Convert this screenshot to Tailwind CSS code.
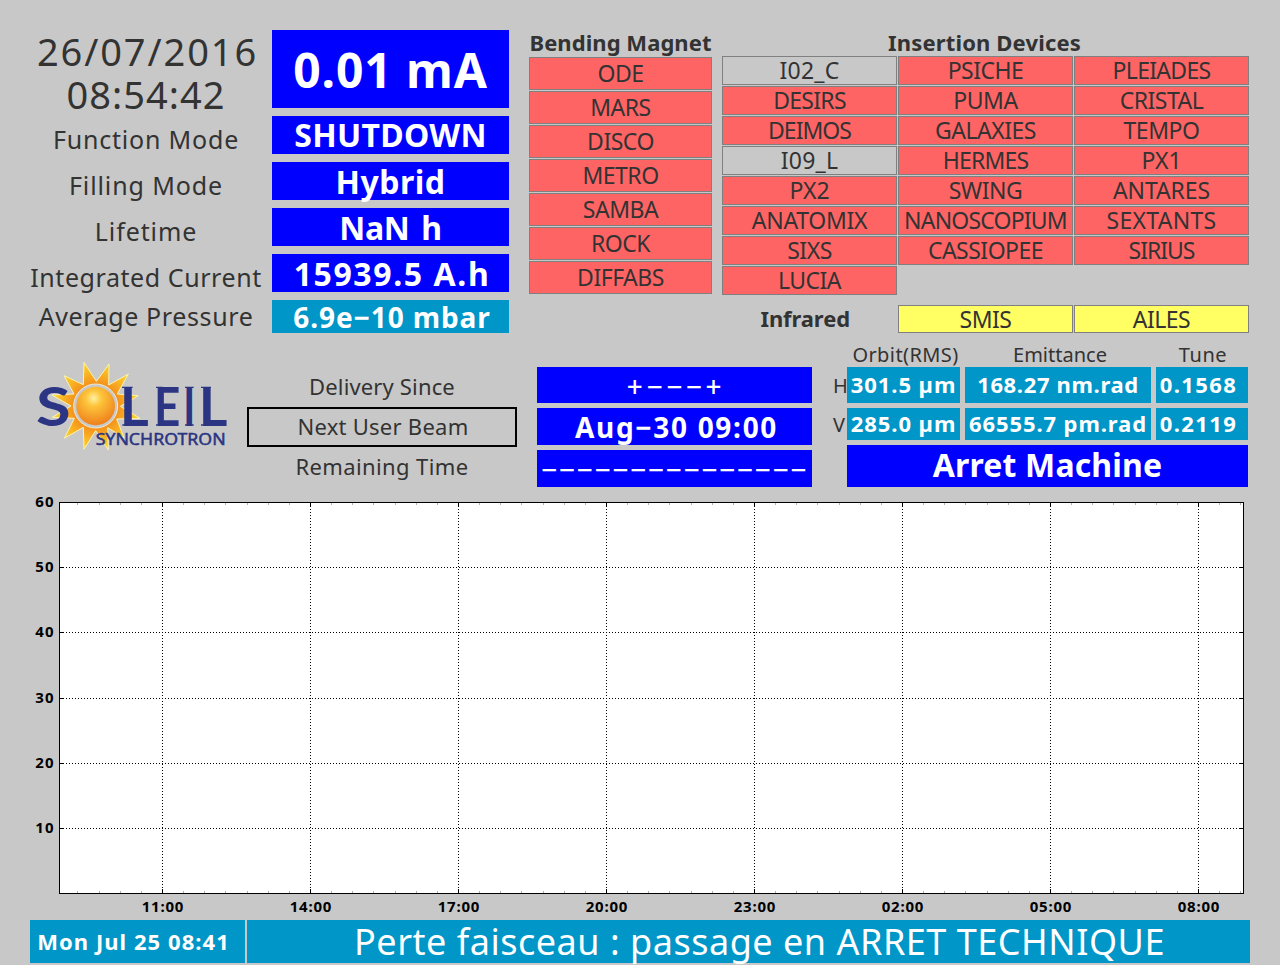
<!DOCTYPE html>
<html lang="fr">
<head>
    <meta charset="utf-8" />
    <title>SOLEIL Synchrotron</title>
    <script src="https://cdn.jsdelivr.net/npm/@tailwindcss/browser@4"></script>
</head>
<body class="bg-[#c8c8c8] text-[#333] font-['Noto_Sans','Open_Sans',sans-serif] w-[1280px] h-[965px] overflow-hidden whitespace-nowrap">
<div class="flex h-[333px] pl-[30px] pt-[30px]">
    <!-- machine status -->
    <div class="grid grid-cols-[232px_237px] grid-rows-[78px_38px_38px_38px_38px_33px] gap-x-[10px] gap-y-2 text-center">
        <div class="text-[38px] leading-[43px]">
            <div class="pl-[3px] tracking-[1.9px]">26/07/2016</div>
            <div class="tracking-[1px]">08:54:42</div>
        </div>
        <div class="bg-[#00f] text-white font-bold text-[48px] leading-[79px] tracking-[0.9px]">0.01 mA</div>
        <div class="text-[25px] leading-[46px] tracking-[0.8px]">Function Mode</div>
        <div class="bg-[#00f] text-white font-bold text-[32px] leading-[38px] tracking-[0.3px]">SHUTDOWN</div>
        <div class="text-[25px] leading-[46px] tracking-[0.9px]">Filling Mode</div>
        <div class="bg-[#00f] text-white font-bold text-[32px] leading-[39px] tracking-[0.5px]">Hybrid</div>
        <div class="text-[25px] leading-[46px] tracking-[0.9px]">Lifetime</div>
        <div class="bg-[#00f] text-white font-bold text-[32px] leading-[39px] tracking-[-0.4px] [word-spacing:4px]">NaN h</div>
        <div class="text-[25px] leading-[46px] tracking-[0.57px]">Integrated Current</div>
        <div class="bg-[#00f] pl-[3px] text-white font-bold text-[32px] leading-[39px] tracking-[1.6px]">15939.5 A.h</div>
        <div class="text-[25px] leading-[33px] tracking-[0.61px]">Average Pressure</div>
        <div class="bg-[#0096c8] pl-[3px] text-white font-bold text-[28px] leading-[34px] tracking-[0.9px]">6.9e−10 mbar</div>
    </div>

    <!-- bending magnet beamlines -->
    <div class="ml-5 w-[183px] text-center">
        <h2 class="h-[27px] text-[22px] leading-[25px] font-bold tracking-[0.05px]">Bending Magnet</h2>
        <div class="flex flex-col gap-px text-[23px] leading-[30px] tracking-[-0.5px] [&>div]:h-[33px] [&>div]:border [&>div]:border-[#808080] [&>div]:bg-[#ff6464]">
            <div>ODE</div>
            <div>MARS</div>
            <div>DISCO</div>
            <div>METRO</div>
            <div>SAMBA</div>
            <div>ROCK</div>
            <div>DIFFABS</div>
        </div>
    </div>

    <!-- insertion device beamlines -->
    <div class="ml-[10px] w-[527px] text-center">
        <h2 class="h-[26px] pr-[2px] text-[22px] leading-[25px] font-bold tracking-[0.15px]">Insertion Devices</h2>
        <div class="grid grid-cols-3 gap-px text-[23px] leading-[27px] tracking-[-0.5px] [&>div]:h-[29px] [&>div]:border [&>div]:border-[#808080]">
            <div class="tracking-[0.2px]">I02_C</div>
            <div class="bg-[#ff6464]">PSICHE</div>
            <div class="bg-[#ff6464] tracking-[-0.7px]">PLEIADES</div>
            <div class="bg-[#ff6464] tracking-[-0.7px]">DESIRS</div>
            <div class="bg-[#ff6464]">PUMA</div>
            <div class="bg-[#ff6464]">CRISTAL</div>
            <div class="bg-[#ff6464] tracking-[-1px]">DEIMOS</div>
            <div class="bg-[#ff6464]">GALAXIES</div>
            <div class="bg-[#ff6464]">TEMPO</div>
            <div class="tracking-[0.2px]">I09_L</div>
            <div class="bg-[#ff6464] tracking-[-0.8px]">HERMES</div>
            <div class="bg-[#ff6464] tracking-[0px]">PX1</div>
            <div class="bg-[#ff6464] tracking-[0px]">PX2</div>
            <div class="bg-[#ff6464]">SWING</div>
            <div class="bg-[#ff6464] tracking-[-0.1px]">ANTARES</div>
            <div class="bg-[#ff6464] tracking-[-0.3px]">ANATOMIX</div>
            <div class="bg-[#ff6464] tracking-[-0.8px]">NANOSCOPIUM</div>
            <div class="bg-[#ff6464] tracking-[0.28px]">SEXTANTS</div>
            <div class="bg-[#ff6464]">SIXS</div>
            <div class="bg-[#ff6464]">CASSIOPEE</div>
            <div class="bg-[#ff6464] tracking-[-1px]">SIRIUS</div>
            <div class="bg-[#ff6464]">LUCIA</div>
        </div>
        <div class="mt-[10px] grid grid-cols-3 gap-px text-[23px] leading-[26px] tracking-[-0.5px]">
            <div class="pr-[47px] text-right text-[22px] leading-[27px] font-bold tracking-[-0.1px]">Infrared</div>
            <div class="h-[28px] border border-[#808080] bg-[#ffff64]">SMIS</div>
            <div class="h-[28px] border border-[#808080] bg-[#ffff64]">AILES</div>
        </div>
    </div>
</div>

<div class="flex h-[164px] pl-[30px]">
    <svg class="mt-[22px] w-[210px] h-[105px]" viewBox="0 0 630 315">
        <defs>
            <radialGradient id="rays" gradientUnits="userSpaceOnUse" cx="197" cy="153" r="135">
                <stop offset="0.5" stop-color="#f5921c" />
                <stop offset="1" stop-color="#fdd92e" />
            </radialGradient>
            <radialGradient id="ball" cx="0.45" cy="0.3" r="0.7">
                <stop offset="0" stop-color="#fff0a0" />
                <stop offset="0.3" stop-color="#fdc43a" />
                <stop offset="1" stop-color="#ee7f1b" />
            </radialGradient>
        </defs>
        <path fill="url(#rays)" stroke="#fdf3b0" stroke-width="3" stroke-linejoin="round" d="M162 22L199 79L237 27L236 90L295 57L262 117L325 122L271 154L330 190L260 192L282 248L233 218L235 285L197 227L162 283L160 217L103 250L133 190L67 187L123 153L65 120L132 117L102 62L160 89Z" />
        <circle cx="197" cy="153" r="66" fill="#c8c8c8" stroke="#f0ead0" stroke-width="3" />
        <circle cx="197" cy="153" r="58" fill="url(#ball)" />
        <g fill="#2b3583" font-family="Lato, sans-serif" font-weight="700" font-size="163">
            <text x="18" y="212" textLength="104" lengthAdjust="spacingAndGlyphs">S</text>
            <text x="269" y="212" textLength="87" lengthAdjust="spacingAndGlyphs">L</text>
            <text x="372" y="212" textLength="79" lengthAdjust="spacingAndGlyphs">E</text>
            <text x="460" y="212" textLength="36" lengthAdjust="spacingAndGlyphs">I</text>
            <text x="506" y="212" textLength="86" lengthAdjust="spacingAndGlyphs">L</text>
        </g>
        <!-- small serifs -->
        <path fill="#2b3583" d="M276 95h32v4h-32zM277 208h20v4h-20zM378 95h20v4h-20zM378 208h20v4h-20zM465 95h26v4h-26zM465 208h26v4h-26zM513 95h30v4h-30zM513 208h20v4h-20z" />
        <text x="197" y="270" fill="#2b3583" font-family="Noto Sans, sans-serif" font-weight="400" font-size="50" textLength="390" lengthAdjust="spacingAndGlyphs" stroke="#2b3583" stroke-width="1.5">SYNCHROTRON</text>
    </svg>

    <!-- beam delivery -->
    <div class="ml-[7px] mt-[34px] w-[270px] text-center text-[22px]">
        <div class="h-[40px] leading-[39px] tracking-[0.15px]">Delivery Since</div>
        <div class="h-[40px] border-2 border-black pl-[2px] leading-[35px] tracking-[0.25px]">Next User Beam</div>
        <div class="h-[40px] leading-[39px] tracking-[0.38px]">Remaining Time</div>
    </div>
    <div class="ml-5 mt-[34px] grid w-[275px] grid-rows-[36px_37px_37px] gap-[5px] text-center text-[28px] leading-[37px] text-white [&>div]:bg-[#00f]">
        <div class="pl-[3px] font-medium leading-[39px] tracking-[3.63px]">+−−−+</div>
        <div class="pl-[4px] font-bold leading-[38px] tracking-[1.7px]">Aug−30 09:00</div>
        <div class="font-medium leading-[38px] tracking-[1.7px]">−−−−−−−−−−−−−−−</div>
    </div>

    <!-- beam parameters -->
    <div class="ml-[21px] mt-3 grid grid-cols-[9px_113px_186px_92px] grid-rows-[17px_36px_32px_42px] gap-[5px] text-center text-[20px]">
        <div></div>
        <div class="pl-1 leading-[19px] tracking-[0.4px]">Orbit(RMS)</div>
        <div class="leading-[19px] pl-1">Emittance</div>
        <div class="pl-[2px] leading-[19px] tracking-[0.6px]">Tune</div>
        <div class="leading-[38px]">H</div>
        <div class="bg-[#0096c8] text-white text-[22px] leading-[35px] font-bold tracking-[0.95px]">301.5 µm</div>
        <div class="bg-[#0096c8] text-white text-[22px] leading-[35px] font-bold tracking-[0.65px]">168.27 nm.rad</div>
        <div class="bg-[#0096c8] pr-[7px] text-white text-[22px] leading-[35px] font-bold tracking-[1.4px]">0.1568</div>
        <div class="leading-[34px]">V</div>
        <div class="bg-[#0096c8] text-white text-[22px] leading-[31px] font-bold tracking-[0.95px]">285.0 µm</div>
        <div class="bg-[#0096c8] text-white text-[22px] leading-[31px] font-bold tracking-[0.9px]">66555.7 pm.rad</div>
        <div class="bg-[#0096c8] pr-[7px] text-white text-[22px] leading-[31px] font-bold tracking-[1.4px]">0.2119</div>
        <div></div>
        <div class="col-span-3 bg-[#00f] text-white text-[32px] leading-[40px] font-bold tracking-[0.15px]">Arret Machine</div>
    </div>
</div>

<!-- stored current over the last 24 hours -->
<svg id="chart" class="block w-[1280px] h-[423px] font-bold text-[15px]" viewBox="0 497 1280 423" shape-rendering="crispEdges"></svg>

<div class="flex h-[43px] gap-[2px] pl-[30px] text-center text-white">
    <div class="w-[215px] bg-[#0096c8] pr-2 text-[22px] leading-[42px] font-bold tracking-[1.05px]">Mon Jul 25 08:41</div>
    <div class="w-[1003px] bg-[#0096c8] pl-[22px] text-[36px] leading-[43px] tracking-[0.52px]">Perte faisceau : passage en ARRET TECHNIQUE</div>
</div>

<script>
    const hours = ["11:00", "14:00", "17:00", "20:00", "23:00", "02:00", "05:00", "08:00"];
    const levels = { 60: 502, 50: 567, 40: 632, 30: 698, 20: 763, 10: 828 };
    let svg = '<rect x="59.5" y="502.5" width="1184" height="391" fill="#fff" stroke="#000" />';

    // minor ticks between the hours
    for (let h = -1; h < 8; h++) {
        for (const step of [21, 42, 63, 85, 106, 127]) {
            const x = 162 + h * 148 + step;
            if (x > 60 && x < 1243) {
                svg += `<rect x="${x}" y="503" width="1" height="2" fill="#b0b0b0" /><rect x="${x}" y="891" width="1" height="2" fill="#b0b0b0" />`;
            }
        }
    }
    hours.forEach((label, i) => {
        const x = 162 + i * 148;
        svg += `<path d="M${x + 0.5} 503V893" stroke="#000" stroke-dasharray="1 2" />`;
        svg += `<path d="M${x + 0.5} 503v4M${x + 0.5} 889v4" stroke="#000" />`;
        svg += `<text x="${x + 1}" y="912" text-anchor="middle" letter-spacing="0.8">${label}</text>`;
    });
    for (const level in levels) {
        const y = levels[level];
        if (level < 60) {
            svg += `<path d="M60 ${y + 0.5}H1243" stroke="#000" stroke-dasharray="1 2" />`;
            svg += `<path d="M60 ${y + 0.5}h4M1239 ${y + 0.5}h4" stroke="#000" />`;
        }
        svg += `<text x="54.5" y="${y + 5}" text-anchor="end" letter-spacing="1">${level}</text>`;
    }
    document.getElementById("chart").innerHTML = svg;
</script>
</body>
</html>
